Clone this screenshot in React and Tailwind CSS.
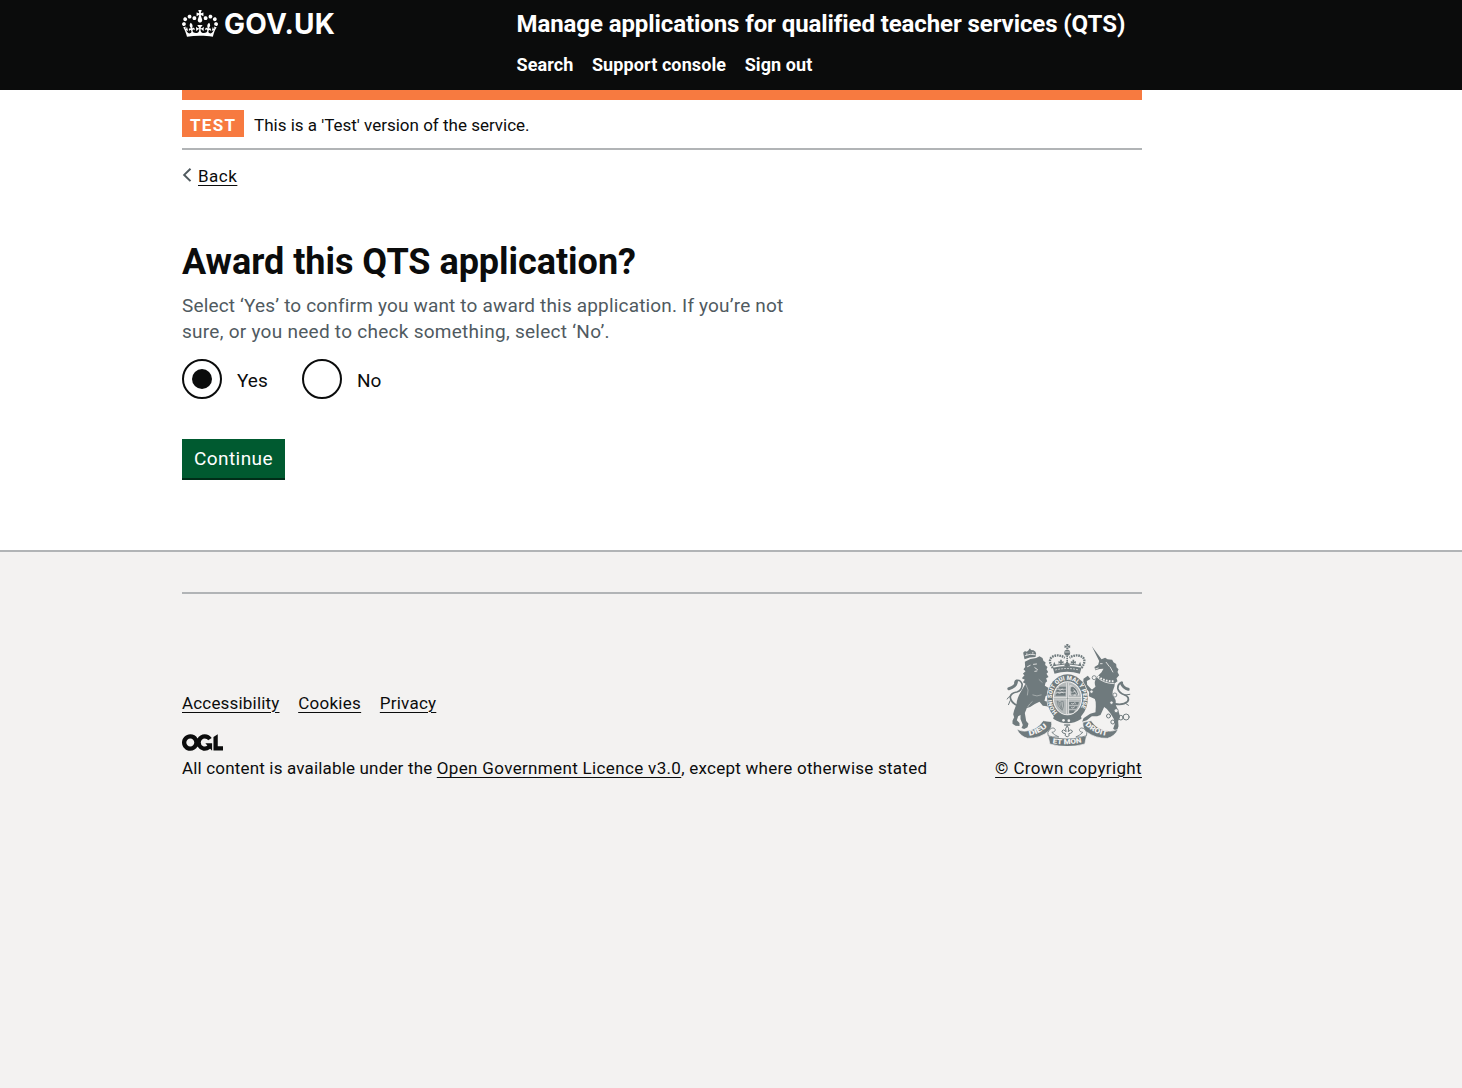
import React, { useState } from 'react';

const linkClass = 'underline decoration-1 underline-offset-[3px]';

function Crown() {
  return (
    <svg className="h-[27px] w-9" viewBox="0 0 132 97" preserveAspectRatio="none" fill="currentColor" aria-hidden="true">
      <path d="M25 30.2c3.5 1.5 7.7-.2 9.1-3.7 1.5-3.6-.2-7.8-3.9-9.2-3.6-1.4-7.6.3-9.1 3.9-1.4 3.5.3 7.5 3.9 9zM9 39.5c3.6 1.5 7.8-.2 9.2-3.7 1.5-3.6-.2-7.8-3.9-9.1-3.6-1.5-7.6.2-9.1 3.8-1.4 3.5.3 7.5 3.8 9zM4.4 57.2c3.5 1.5 7.7-.2 9.1-3.8 1.5-3.6-.2-7.7-3.9-9.1-3.5-1.5-7.6.3-9.1 3.8-1.4 3.5.3 7.6 3.9 9.1zm38.3-21.4c3.5 1.5 7.7-.2 9.1-3.8 1.5-3.6-.2-7.7-3.9-9.1-3.6-1.5-7.6.3-9.1 3.8-1.3 3.6.4 7.7 3.9 9.1zm64.4-5.6c-3.6 1.5-7.8-.2-9.1-3.7-1.5-3.6.2-7.8 3.8-9.2 3.6-1.4 7.7.3 9.2 3.9 1.3 3.5-.4 7.5-3.9 9zm15.9 9.3c-3.6 1.5-7.7-.2-9.1-3.7-1.5-3.6.2-7.8 3.7-9.1 3.6-1.5 7.7.2 9.2 3.8 1.5 3.5-.3 7.5-3.8 9zm4.7 17.7c-3.6 1.5-7.8-.2-9.2-3.8-1.5-3.6.2-7.7 3.9-9.1 3.6-1.5 7.7.3 9.2 3.8 1.3 3.5-.4 7.6-3.9 9.1zM89.3 35.8c-3.6 1.5-7.8-.2-9.2-3.8-1.4-3.6.2-7.7 3.9-9.1 3.6-1.5 7.7.3 9.2 3.8 1.4 3.6-.3 7.7-3.9 9.1zM69.7 17.7l8.9 4.7V9.3l-8.9 2.8c-.2-.3-.5-.6-.9-.9L72.4 0H59.6l3.5 11.2c-.3.3-.6.5-.9.9l-8.8-2.8v13.1l8.8-4.7c.3.3.6.7.9.9l-5 15.4v.1c-.2.8-.4 1.6-.4 2.4 0 4.1 3.1 7.5 7 8.1h.2c.3 0 .7.1 1 .1.4 0 .7 0 1-.1h.2c4-.6 7.1-4.1 7.1-8.1 0-.8-.1-1.7-.4-2.4V34l-5.1-15.4c.4-.2.7-.6 1-.9zM66 92.8c16.9 0 32.8 1.1 47.1 3.2 4-16.9 8.9-26.7 14-33.5l-9.6-3.4c1 4.9 1.1 7.2 0 10.2-1.5-1.4-3-4.3-4.2-8.7L108.6 76c2.8-2 5-3.2 7.5-3.3-4.4 9.4-10 11.9-13.6 11.2-4.3-.8-6.3-4.6-5.6-7.9 1-4.7 5.7-5.9 8-.5 4.3-8.7-3-11.4-7.6-8.8 7.1-7.2 7.9-13.5 2.1-21.1-8 6.1-8.1 12.3-4.5 20.8-4.7-5.4-12.1-2.5-9.5 6.2 3.4-5.2 7.9-2 7.2 3.1-.6 4.3-6.4 7.8-13.5 7.2-10.3-.9-10.9-8-11.2-13.8 2.5-.5 7.1 1.8 11 7.3L80.2 60c-4.1 4.4-8 5.3-12.3 5.4 1.4-4.4 8-11.6 8-11.6H55.5s6.4 7.2 7.9 11.6c-4.2-.1-8-1-12.3-5.4l1.4 16.4c3.9-5.5 8.5-7.7 10.9-7.3-.3 5.8-.9 12.8-11.1 13.8-7.2.6-12.9-2.9-13.5-7.2-.7-5 3.8-8.3 7.1-3.1 2.7-8.7-4.6-11.6-9.4-6.2 3.7-8.5 3.6-14.7-4.6-20.8-5.8 7.6-5 13.9 2.2 21.1-4.7-2.6-11.9.1-7.7 8.8 2.3-5.5 7.1-4.2 8.1.5.7 3.3-1.3 7.1-5.7 7.9-3.5.7-9-1.8-13.5-11.2 2.5.1 4.7 1.3 7.5 3.3l-4.7-15.4c-1.2 4.4-2.7 7.2-4.3 8.7-1.1-3-.9-5.3 0-10.2l-9.5 3.4c5 6.9 9.9 16.7 14 33.5 14.8-2.1 30.8-3.2 47.7-3.2z" />
    </svg>
  );
}

function OglLogo() {
  return (
    <svg className="h-[17px] w-[41px]" viewBox="0 0 483.2 195.7" fill="currentColor" aria-hidden="true">
      <path d="M421.5 142.8V.1l-50.7 32.3v161.1h112.4v-50.7zm-122.3-9.6A47.12 47.12 0 0 1 221 97.8c0-26 21.1-47.1 47.1-47.1 16.7 0 31.4 8.7 39.7 21.8l42.7-27.2A97.63 97.63 0 0 0 268.1 0c-36.5 0-68.3 20.1-85.1 49.7A98 98 0 0 0 97.8 0C43.9 0 0 43.9 0 97.8s43.9 97.8 97.8 97.8c36.5 0 68.3-20.1 85.1-49.7a97.76 97.76 0 0 0 149.6 25.4l19.4 22.2h3v-87.8h-80l24.3 27.5zM97.8 145c-26 0-47.1-21.1-47.1-47.1s21.1-47.1 47.1-47.1 47.1 21.1 47.1 47.1S123.8 145 97.8 145" />
    </svg>
  );
}

function RoyalArms() {
  const ink = '#6f7a7d';
  const paper = '#f3f2f1';
  return (
    <svg className="h-[102px] w-[125px]" viewBox="48 27 374 306" aria-hidden="true">
      <defs>
        <path id="garter" d="M202 232 A47 55 0 1 1 262 232" />
        <path id="dieu" d="M117 302 Q150 298 176 270" />
        <path id="etmon" d="M187 325 Q231 332 277 322" />
        <path id="droit" d="M285 270 Q312 298 356 303" />
      </defs>
      <g fill={ink} stroke="none">
        {/* lion's crown */}
        <path d="M103 73 L99 53 Q104 47 110 50 L116 45 L117 41 L121 41 L122 45 L130 46 Q138 50 138 56 L136 66 Q118 66 103 73z" />
        {/* lion */}
        <path d="M104 80 Q120 70 138 69 L148 64 L157 69 L160 78 L166 82 L165 90 L172 96 L169 103 L174 111 L169 116 L175 126 L168 130 L171 139 L166 143 L164 152 L174 158 L184 160 L180 167 L176 166 L177 174 L184 178 L180 184 L173 181 L166 184 L163 198 L176 200 L184 210 L179 218 L170 214 L158 212 L148 200 L134 207 Q121 217 110 219 L104 234 L108 258 L115 266 L112 277 L102 282 L94 279 L98 270 L91 252 L91 240 L84 244 L80 256 L88 264 L88 273 L76 272 L67 266 L67 257 L72 247 L69 238 L72 226 L79 207 Q80 190 92 170 Q101 155 106 146 L98 142 L104 134 L95 130 L103 121 L98 116 L106 109 L100 103 L105 96z" />
        {/* unicorn */}
        <path d="M305 34 L334 73 L345 68 L352 73 L366 74 L370 82 L378 87 L379 97 L385 103 L382 111 L387 121 L379 130 L382 139 L374 145 L373 154 Q366 168 367 180 Q380 194 376 208 L386 232 L390 245 L384 258 L385 274 L380 289 L369 281 L374 266 L371 252 L362 237 L350 222 L342 216 L331 240 L321 244 L305 244 L290 256 L276 260 L280 250 L300 236 L316 232 L317 214 Q318 200 314 192 L296 184 L297 171 L286 159 L279 148 L280 131 L293 122 L301 132 L290 138 L291 149 L305 164 L316 155 Q310 140 320 126 L334 112 L340 101 L328 102 L315 106 L313 96 L324 89 L327 78z" />
      </g>
      <g fill="none" stroke={ink} strokeLinecap="round">
        {/* tails */}
        <path strokeWidth="5" d="M84 213 Q61 203 60 185 Q63 174 80 171 Q96 167 96 148 Q92 134 79 136 Q72 140 76 148" />
        <path strokeWidth="9" d="M79 140 Q77 156 56 161" />
        <path strokeWidth="3" d="M62 183 Q54 185 51 192 M60 197 L55 209" />
        <path strokeWidth="5.5" d="M376 207 Q400 211 412 200 Q420 187 404 180 Q386 174 383 161 Q382 145 396 142" />
        <path strokeWidth="9" d="M393 144 Q400 160 414 163" />
        <path strokeWidth="3" d="M404 180 L419 178 M406 205 L415 211" />
        {/* chain */}
        <circle cx="355" cy="243" r="6" strokeWidth="3" />
        <circle cx="368" cy="261" r="6" strokeWidth="3" />
        <circle cx="392" cy="248" r="7" strokeWidth="3" />
        <circle cx="408" cy="246" r="9" strokeWidth="3" />
      </g>
      <g fill="none" stroke={paper} strokeLinecap="round">
        <path strokeWidth="2.5" d="M112 95 L120 91 M130 88 L139 87 M134 98 L142 104 M134 109 L140 108 M105 62 Q120 55 135 59 M110 56 v3 M128 52 v3" />
        <path strokeWidth="1.2" d="M108 150 Q118 165 112 180 M128 180 Q140 186 153 180 M126 200 Q118 206 113 215 M147 134 L156 142" />
        <path strokeWidth="2.5" d="M331 86 h5 M316 102 l8 -3 M348 82 l9 12 M360 96 l8 15" />
        <path strokeWidth="6" strokeDasharray="5 4" strokeLinecap="butt" d="M323 124 Q345 140 370 139" />
        <path strokeWidth="2.5" d="M322 128 Q342 146 372 146" />
      </g>
      <g fill={paper} stroke={ink} strokeWidth="2.5">
        <circle cx="312" cy="128" r="6" />
        <circle cx="374" cy="180" r="6" />
        <circle cx="364" cy="203" r="5" />
        <circle cx="378" cy="227" r="6" />
        <circle cx="304" cy="170" r="5" />
      </g>
      {/* garter and shield */}
      <ellipse cx="232" cy="190" rx="63" ry="75" fill={paper} />
      <ellipse cx="232" cy="190" rx="61" ry="72" fill={ink} />
      <ellipse cx="232" cy="190" rx="44" ry="51" fill={paper} />
      <ellipse cx="232" cy="190" rx="41" ry="48" fill="#b4b9ba" />
      <g fill={ink}>
        <path d="M198 160 h9 v-5 h20 v6 h-26z M196 168 l6 -4 h25 v6 h-28z M197 178 l5 -4 h24 v8 h-30z" />
        <path d="M237 234 v-8 h18 l-6 8z M237 221 v-7 h26 l-5 7z M237 209 v-8 h29 l-2 8z" />
        <path d="M242 158 l5 -5 8 4 6 8 3 15 -5 4 -4 -8 -7 7 -7 -3 5 -9 -5 -4z" />
      </g>
      <g fill="none" stroke={paper} strokeWidth="2">
        <path d="M205 163 l5 3 6 -4 4 3 M203 173 l6 2 6 -4 5 3 M243 217 l5 2 6 -4 M243 205 l5 2 6 -4 4 3 M249 163 l6 6 M247 172 l8 -3 4 8" />
        <path d="M239 180 V152 Q260 153 266 180z" />
        <path strokeWidth="6" d="M232 143 V237 M191 190 H273" />
      </g>
      <g fill="none" stroke={ink}>
        <path strokeWidth="1.6" d="M232 143 V237 M191 190 H273" />
        <path strokeWidth="2" d="M201 198 Q200 214 216 226 Q223 214 219 199 Q212 197 209 203 Q205 200 201 198z M206 202 L213 221 M212 201 L215 221" />
      </g>
      <path d="M192 240 Q232 266 272 240 L274 251 Q232 278 189 251z" fill={ink} />
      <g fill={paper}>
        <circle cx="220" cy="256" r="4" />
        <circle cx="236" cy="257" r="4" />
      </g>
      <text fill={paper} fontFamily="Roboto, sans-serif" fontWeight="900" fontSize="18">
        <textPath href="#garter" textLength="236" lengthAdjust="spacingAndGlyphs">HONI SOIT QUI MAL Y PENSE</textPath>
      </text>
      {/* crown */}
      <g fill="none" stroke={ink}>
        <path strokeWidth="7" strokeDasharray="5 2.5" d="M188 99 Q173 78 184 67 Q202 55 224 68 M274 99 Q289 78 278 67 Q260 55 238 68" />
        <path strokeWidth="5" strokeDasharray="4 2" d="M231 62 V96" />
        <path strokeWidth="3" d="M192 91 Q231 82 270 91" />
      </g>
      <g fill={ink}>
        <path d="M228 27 h7 l-1 6 6 -2 v8 l-6 -2 1 6 h-7 l1 -6 -6 2 v-8 l6 2z" />
        <circle cx="231" cy="53" r="9" />
        <path d="M188 98 Q231 88 274 98 L269 116 Q231 105 193 116z" />
        <path d="M210 90 v-6 l-5 2 v-8 l5 2 v-6 h5 v6 l5 -2 v8 l-5 -2 v6z M247 90 v-6 l-5 2 v-8 l5 2 v-6 h5 v6 l5 -2 v8 l-5 -2 v6z M222 93 l9 -16 9 16z" />
        <path d="M188 94 l4 -14 6 12z M274 94 l-4 -14 -6 12z" />
      </g>
      <path d="M195 105 Q231 96 267 105" fill="none" stroke={paper} strokeWidth="2" strokeDasharray="6 3" />
      <path d="M223 51 h16 M231 33 v6" stroke={paper} strokeWidth="2" />
      {/* motto scroll */}
      <g fill={ink} stroke={paper} strokeWidth="2">
        <path d="M80 283 Q96 290 108 288 Q142 284 159 257 L184 260 Q187 277 177 287 Q150 311 112 310 Q90 304 80 283z" />
        <path d="M384 283 Q366 290 354 288 Q320 284 303 257 L278 262 Q277 280 288 290 Q316 311 352 310 Q374 304 384 283z" />
        <path d="M174 302 Q231 318 289 302 L284 327 Q231 342 179 327z" />
      </g>
      <g fill={paper} stroke={ink} strokeWidth="2.5">
        <path d="M174 302 Q170 292 178 284 Q190 274 195 283 Q196 291 185 292 Q192 300 206 306 Q186 308 174 302z" />
        <path d="M289 302 Q293 292 285 284 Q273 274 268 283 Q267 291 278 292 Q271 300 257 306 Q277 308 289 302z" />
      </g>
      {/* fleur-de-lis */}
      <path d="M231 272 Q239 282 234 290 Q243 280 247 288 Q246 296 236 296 L237 302 Q231 309 225 302 L226 296 Q216 296 215 288 Q219 280 228 290 Q223 282 231 272z" fill={paper} stroke={ink} strokeWidth="3" />
      <path d="M222 270 h18" stroke={ink} strokeWidth="4" />
      <g fill={paper} fontFamily="Roboto, sans-serif" fontWeight="900" fontSize="21">
        <text><textPath href="#dieu" textLength="62" lengthAdjust="spacingAndGlyphs">DIEU</textPath></text>
        <text><textPath href="#etmon" textLength="88" lengthAdjust="spacingAndGlyphs">ET MON</textPath></text>
        <text><textPath href="#droit" textLength="74" lengthAdjust="spacingAndGlyphs">DROIT</textPath></text>
      </g>
    </svg>
  );
}

function Radio({ label, checked, onChange, width }) {
  return (
    <label className={`flex cursor-pointer items-center ${width}`}>
      <input type="radio" name="award" className="sr-only" checked={checked} onChange={onChange} />
      <span className="flex size-10 items-center justify-center rounded-full border-2 border-[#0b0c0c]">
        {checked && <span className="size-5 rounded-full bg-[#0b0c0c]" />}
      </span>
      <span className="pt-[3px] pl-[15px] text-[19px] leading-[25px]">{label}</span>
    </label>
  );
}

export default function App() {
  const [answer, setAnswer] = useState('Yes');
  return (
    <div className="flex min-h-screen flex-col bg-white font-['Roboto',sans-serif] text-[17px] leading-5 text-[#0b0c0c]">
      <header className="h-[90px] bg-[#0b0c0c] text-white">
        <div className="ml-[182px] flex w-[960px]">
          <a className="flex w-[334.5px] items-start pt-[10px]">
            <Crown />
            <span className="ml-[6px] font-['Inter',sans-serif] text-[28px] leading-7 font-bold tracking-[0.25px]">GOV.UK</span>
          </a>
          <div className="pt-[9px] font-bold">
            <div className="text-2xl leading-[30px] tracking-[-0.09px] whitespace-nowrap">
              Manage applications for qualified teacher services (QTS)
            </div>
            <nav className="flex gap-[18.5px] pt-4 text-lg leading-5 tracking-[0.1px]">
              <a>Search</a>
              <a>Support console</a>
              <a>Sign out</a>
            </nav>
          </div>
        </div>
      </header>

      <div className="ml-[182px] w-[960px]">
        <div className="h-[10px] bg-[#f77a40]" />
        <div className="flex h-[50px] items-start border-b-2 border-[#b1b4b6] pt-[10px]">
          <strong className="flex h-[27px] w-[62px] items-center bg-[#f77a40] pt-[3px] pl-2 font-bold tracking-[1.3px] text-white">TEST</strong>
          <span className="pt-[5px] pl-[10px]">This is a 'Test' version of the service.</span>
        </div>
        <a className="mt-4 flex items-start">
          <svg className="mt-[2px] mr-[5px] h-[14px] w-[11px]" viewBox="0 0 11 14" fill="none" stroke="#505a5f" strokeWidth="2" aria-hidden="true">
            <path d="M8.5 .7 2.2 6.9l6.3 6.2" />
          </svg>
          <span className={`${linkClass} tracking-[0.5px]`}>Back</span>
        </a>

        <main className="pt-14">
          <h1 className="text-4xl leading-10 font-bold tracking-[-0.04px]">Award this QTS application?</h1>
          <p className="mt-[11px] text-[19px] leading-[26px] whitespace-nowrap text-[#505a5f]">
            <span className="tracking-[0.17px]">Select ‘Yes’ to confirm you want to award this application. If you’re not</span>
            <br />
            <span className="tracking-[0.27px]">sure, or you need to check something, select ‘No’.</span>
          </p>
          <div className="mt-[14px] flex">
            <Radio label="Yes" width="w-[120px]" checked={answer === 'Yes'} onChange={() => setAnswer('Yes')} />
            <Radio label="No" width="w-[100px]" checked={answer === 'No'} onChange={() => setAnswer('No')} />
          </div>
          <button className="mt-10 flex h-[41px] w-[103px] items-center justify-center border-b-2 border-[#002d18] bg-[#005a30] text-[19px] leading-5 tracking-[0.42px] text-white">
            Continue
          </button>
        </main>
      </div>

      <footer className="mt-[70px] grow border-t-2 border-[#b1b4b6] bg-[#f3f2f1] pt-10">
        <div className="ml-[182px] w-[960px] border-t-2 border-[#b1b4b6] pt-[50px]">
          <div className="flex items-end justify-between">
            <div>
              <nav className="flex gap-[18.7px]">
                <a className={`${linkClass} tracking-[0.18px]`}>Accessibility</a>
                <a className={`${linkClass} tracking-[0.28px]`}>Cookies</a>
                <a className={`${linkClass} tracking-[0.22px]`}>Privacy</a>
              </nav>
              <div className="mt-[21px]"><OglLogo /></div>
              <p className="mt-[7px] whitespace-nowrap">
                <span className="tracking-[0.17px]">All content is available under the </span>
                <a className={`${linkClass} tracking-[0.34px]`}>Open Government Licence v3.0</a>
                <span className="tracking-[0.25px]">, except where otherwise stated</span>
              </p>
            </div>
            <div className="flex flex-col items-center">
              <RoyalArms />
              <a className={`${linkClass} mt-3 tracking-[0.36px]`}>© Crown copyright</a>
            </div>
          </div>
        </div>
      </footer>
    </div>
  );
}
